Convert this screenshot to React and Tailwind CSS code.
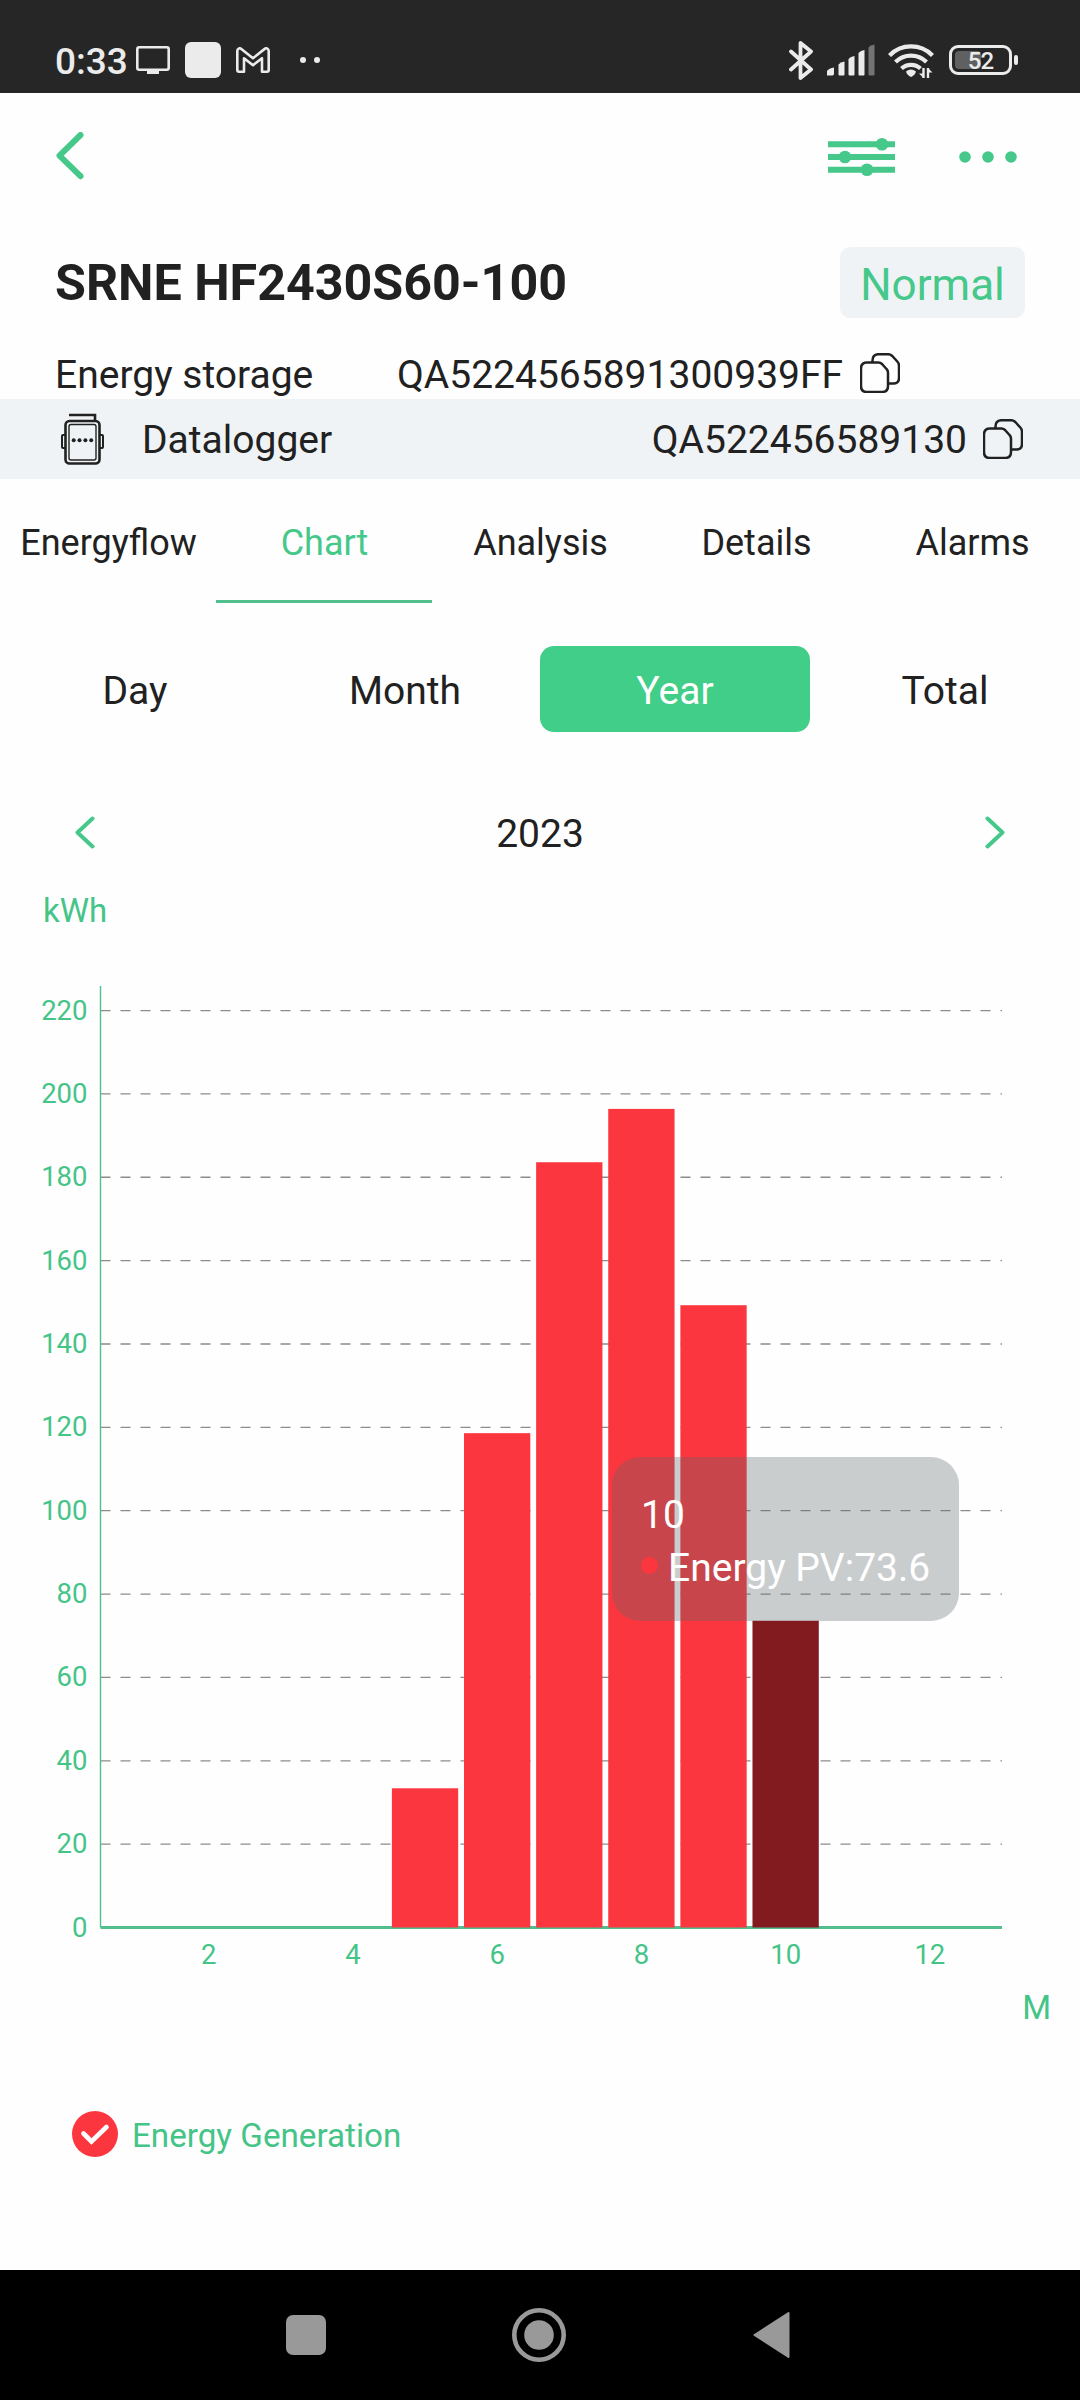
const TABS = ['Energyflow', 'Chart', 'Analysis', 'Details', 'Alarms']
const PERIODS = ['Day', 'Month', 'Year', 'Total']

const MONTHLY = [
  { month: 5, value: 33.4 },
  { month: 6, value: 118.6 },
  { month: 7, value: 183.6 },
  { month: 8, value: 196.4 },
  { month: 9, value: 149.3 },
  { month: 10, value: 73.6 },
]
const SELECTED_MONTH = 10

const Y_TICKS = [0, 20, 40, 60, 80, 100, 120, 140, 160, 180, 200, 220]
const X_TICKS = [2, 4, 6, 8, 10, 12]

// plot area, in chart pixels
const LEFT = 100.5
const RIGHT = 1002
const TOP = 56
const BASE = 997.5
const SLOT = 72.12
const BAR_WIDTH = 66.3

const yOf = (v) => BASE - v * 4.168
const xOf = (month) => LEFT + (month - 0.5) * SLOT

function StatusBar() {
  return (
    <header className="flex h-[93px] shrink-0 items-center justify-between bg-[#262626] pt-[27px] pr-[62px] pl-[55px] text-[#ebebeb]">
      <div className="flex items-center">
        <span className="w-[81px] pt-1 text-[37px] leading-10 font-medium">0:33</span>
        <svg className="h-7 w-[34px]" viewBox="0 0 34 28" fill="none">
          <rect x="1.3" y="1.3" width="31.4" height="22.4" rx="2" stroke="currentColor" strokeWidth="2.6" />
          <path d="M11 24h12v4H11z" fill="currentColor" />
        </svg>
        <span className="ml-[15px] size-9 rounded-md bg-[#ebebeb]" />
        <svg className="ml-[15px] h-[26px] w-[34px]" viewBox="0 0 34 26" fill="none" stroke="currentColor" strokeWidth="2.6" strokeLinejoin="round">
          <path d="M3 24.7H8V11.2l9 7 9-7v13.5h5q1.7 0 1.7-1.7V4c0-2.4-2.3-3.4-4-2.1L17 11.2 5.3 1.9C3.6.6 1.3 1.6 1.3 4v19q0 1.7 1.7 1.7z" />
        </svg>
        <span className="ml-[30px] size-1.5 rounded-full bg-[#ebebeb]" />
        <span className="ml-2 size-1.5 rounded-full bg-[#ebebeb]" />
      </div>

      <div className="flex items-center">
        <svg className="h-[39px] w-6" viewBox="0 0 24 39" fill="none" stroke="currentColor" strokeWidth="3.8" strokeLinecap="round" strokeLinejoin="round">
          <path d="M2 10.5L22 28.5 11.5 37V2L22 10.5 2 28.5" />
        </svg>
        <svg className="ml-3.5 h-8 w-12" viewBox="0 0 48 32" fill="currentColor">
          <path d="M0 31.5V27q2-3 7-3.5v6q0 2-1.5 2z" />
          <path d="M11.5 30.5v-10q2-2.5 6-3v13q0 1-1 1h-4q-1 0-1-1z" />
          <path d="M21.5 30.5V15q2-2.5 6-3v18.5q0 1-1 1h-4q-1 0-1-1z" />
          <path d="M31.5 30.5V9q2-2.5 6-3v24.5q0 1-1 1h-4q-1 0-1-1z" />
          <path d="M41.5 30.5v-27q2-2.5 6-3v30q0 1-1 1h-4q-1 0-1-1z" opacity="0.4" />
        </svg>
        <svg className="ml-[13px] h-[35px] w-[46px]" viewBox="0 0 46 35" fill="none" stroke="currentColor" strokeWidth="4.2">
          <path d="M1.5 12.5A30 30 0 0 1 44.500 12.5" />
          <path d="M7.5 19A22 22 0 0 1 38.500 19" />
          <path d="M13.5 25.500A14 14 0 0 1 32.500 25.500" />
          <path d="M18 28.500Q23 24.500 28 28.500Q27 32 23 34Q19 32 18 28.500z" fill="currentColor" stroke="none" />
          <path d="M35.5 25v10M40 35V25" strokeWidth="2.4" />
          <path d="M31 30.500h4.500v4.500zM44.500 29.500H40V25z" fill="currentColor" stroke="none" />
        </svg>
        <div className="relative ml-[15px] flex h-[30px] w-[63px] items-center justify-center rounded-[9px] border-3 border-[#ebebeb]">
          <span className="absolute top-[3px] left-[3px] h-[18px] w-[26px] rounded-[4px] bg-[#606060]" />
          <span className="relative pt-px text-[24px] leading-6 font-medium tracking-[-1px]">52</span>
        </div>
        <span className="ml-0.5 h-2.5 w-1 rounded-sm bg-[#ebebeb]" />
      </div>
    </header>
  )
}

function CopyIcon({ className }) {
  return (
    <svg className={className} viewBox="0 0 40 40" fill="none" stroke="currentColor" strokeWidth="2.5" strokeLinejoin="round">
      <path d="M7 9.5h11.500q2 0 3.500 1.500l4.500 5q1.500 1.500 1.500 3.500V33q0 6-6 6H7q-6 0-6-6V15.500q0-6 6-6z" />
      <path d="M12.5 9.5v-2q0-6.300 6.300-6.300H28q2.500 0 4.300 1.800l5 5.500q1.700 1.800 1.700 4.200V25q0 5.500-5.500 5.500H28" />
    </svg>
  )
}

function DataloggerIcon() {
  return (
    <svg className="h-[52px] w-[43px]" viewBox="0 0 43 52" fill="none" stroke="currentColor" strokeWidth="2.6">
      <path d="M8 2h26v6" />
      <rect x="4.5" y="8" width="34" height="42.5" rx="4" />
      <rect x="8" y="11.5" width="27" height="35.5" rx="2" strokeWidth="1.4" />
      <path d="M4 22H2q-1 0-1 1v11q0 1 1 1h2M39 22h2q1 0 1 1v11q0 1-1 1h-2" strokeWidth="2" />
      <g fill="currentColor" stroke="none">
        <circle cx="12.7" cy="27.3" r="2" />
        <circle cx="18.5" cy="27.3" r="2" />
        <circle cx="24.4" cy="27.3" r="2" />
        <circle cx="30.2" cy="27.3" r="2" />
      </g>
    </svg>
  )
}

function Chevron({ right }) {
  return (
    <svg className="h-[34px] w-5" viewBox="0 0 20 34" fill="none" stroke="#46c88a" strokeWidth="4" strokeLinecap="round" strokeLinejoin="round">
      <path d={right ? 'M2.500 2.5L17.500 16.5 2.500 30.500' : 'M17.500 2.5L2.500 16.5 17.500 30.500'} />
    </svg>
  )
}

function EnergyChart() {
  return (
    <div className="relative h-[1050px]">
      <svg className="block h-[1050px] w-[1080px]" viewBox="0 0 1080 1050">
        {Y_TICKS.slice(1).map((v) => (
          <line key={v} x1={LEFT} x2={RIGHT} y1={yOf(v)} y2={yOf(v)} stroke="#8c8c8c" strokeWidth="1.3" strokeDasharray="10 10" />
        ))}
        <line x1={LEFT} x2={RIGHT} y1={BASE} y2={BASE} stroke="#52be8e" strokeWidth="2.8" />
        <line x1={LEFT} x2={LEFT} y1={TOP} y2={BASE} stroke="#52be8e" strokeWidth="1.4" />
        {MONTHLY.map(({ month, value }) => (
          <rect
            key={month}
            x={xOf(month) - BAR_WIDTH / 2}
            y={yOf(value)}
            width={BAR_WIDTH}
            height={BASE - yOf(value)}
            fill={month === SELECTED_MONTH ? '#821b20' : '#fc363e'}
          />
        ))}
        <g fill="#45c488" fontSize="27.5">
          {Y_TICKS.map((v) => (
            <text key={v} x="87.5" y={yOf(v) + 9} textAnchor="end">{v}</text>
          ))}
          {X_TICKS.map((m) => (
            <text key={m} x={xOf(m)} y="1034" textAnchor="middle">{m}</text>
          ))}
        </g>
      </svg>

      <div className="absolute top-[527px] left-[612px] h-[164px] w-[347px] rounded-[28px] bg-[rgb(94,103,106)]/32 pt-8 pl-[29px] text-[39px] leading-[53px] text-white">
        <div>10</div>
        <div className="flex items-center whitespace-nowrap">
          <span className="mr-2.5 -mt-1.5 size-[17px] rounded-full bg-[#fc363e]" />
          Energy PV:73.6
        </div>
      </div>
    </div>
  )
}

export default function App() {
  return (
    <div className="flex h-[2400px] w-[1080px] flex-col overflow-hidden bg-[#fefefe] font-['Roboto',sans-serif] text-[39px] text-[#212121]">
      <StatusBar />

      <div className="flex h-[126px] shrink-0 items-center justify-between pr-[63px] pl-14 text-[#46c88a]">
        <svg className="h-12 w-7" viewBox="0 0 28 48" fill="none" stroke="currentColor" strokeWidth="6" strokeLinecap="round" strokeLinejoin="round">
          <path d="M24.5 3L3.500 23.600l21 20.600" />
        </svg>
        <div className="flex items-center">
          <svg className="mt-0.5 h-[38px] w-[67px]" viewBox="0 0 67 38" fill="currentColor">
            <path d="M0 3.3h67v6H0zM0 16h67v6H0zM0 28.7h67v6H0z" />
            <circle cx="54" cy="6.3" r="6.3" />
            <circle cx="17" cy="19" r="6.3" />
            <circle cx="39" cy="31.7" r="6.3" />
          </svg>
          <svg className="mt-0.5 ml-16 h-3 w-[58px]" viewBox="0 0 58 12" fill="currentColor">
            <circle cx="6" cy="6" r="5.8" />
            <circle cx="29" cy="6" r="5.8" />
            <circle cx="52" cy="6" r="5.8" />
          </svg>
        </div>
      </div>

      <div className="mt-7 flex h-[71px] shrink-0 items-center justify-between px-[55px]">
        <h1 className="text-[50.2px] leading-[71px] font-bold">SRNE HF2430S60-100</h1>
        <span className="flex h-[71px] w-[185px] items-center justify-center rounded-[10px] bg-[#f0f3f6] pt-1 text-[44px] text-[#46c88a]">
          Normal
        </span>
      </div>

      <div className="mt-8 flex h-[49px] shrink-0 items-center pl-[55px]">
        <span className="w-[342px] pt-0.5">Energy storage</span>
        <span className="pt-0.5">QA5224565891300939FF</span>
        <CopyIcon className="mb-1 ml-[17px] size-10" />
      </div>

      <div className="flex h-20 shrink-0 items-center bg-[#f0f3f5] pr-[57px] pl-[61px]">
        <DataloggerIcon />
        <span className="ml-[38px] pt-[3px]">Datalogger</span>
        <span className="ml-auto pt-[3px]">QA522456589130</span>
        <CopyIcon className="ml-4 size-10" />
      </div>

      <nav className="grid h-[124px] shrink-0 grid-cols-5 text-[36px]">
        {TABS.map((tab) => (
          <button
            key={tab}
            type="button"
            className={
              tab === 'Chart'
                ? 'border-b-3 border-[#52c08e] pt-[7px] pl-px text-[#46c88a]'
                : 'border-b-3 border-transparent pt-[7px] pl-px'
            }
          >
            {tab}
          </button>
        ))}
      </nav>

      <div className="mt-[43px] grid h-[86px] shrink-0 grid-cols-4">
        {PERIODS.map((period) => (
          <button
            key={period}
            type="button"
            className={period === 'Year' ? 'rounded-[14px] bg-[#41ce88] pt-1 text-white' : 'pt-1'}
          >
            {period}
          </button>
        ))}
      </div>

      <div className="mt-[71px] flex h-[60px] shrink-0 items-center justify-between px-[75px]">
        <Chevron />
        <span className="pt-0.5">2023</span>
        <Chevron right />
      </div>

      <div className="mt-7 h-[39px] shrink-0 pl-[43px] text-[33px] leading-10 text-[#45c488]">kWh</div>
      <EnergyChart />
      <div className="mt-2 h-10 shrink-0 pr-[29px] text-right text-[33px] leading-10 text-[#45c488]">M</div>

      <div className="mt-[83px] flex h-[46px] shrink-0 items-center pl-[72px] text-[33.2px] text-[#45c488]">
        <svg className="size-[46px]" viewBox="0 0 46 46" fill="none">
          <circle cx="23" cy="23" r="23" fill="#fc363e" />
          <path d="M11.5 22.500l8 8L34.500 16" stroke="#fff" strokeWidth="4.6" strokeLinecap="round" />
        </svg>
        <span className="mt-[3px] ml-3.5">Energy Generation</span>
      </div>

      <footer className="mt-auto flex h-[130px] shrink-0 items-center bg-black pl-[286px] text-[#999999]">
        <span className="size-10 rounded-[7px] bg-[#999999]" />
        <svg className="ml-[186px] size-[54px]" viewBox="0 0 54 54" fill="none">
          <circle cx="27" cy="27" r="24.7" stroke="currentColor" strokeWidth="4.6" />
          <circle cx="27" cy="27" r="14.8" fill="currentColor" />
        </svg>
        <svg className="ml-[187px] h-[46px] w-[37px]" viewBox="0 0 37 46" fill="currentColor">
          <path d="M35.5 1L1.500 23l34 22z" stroke="currentColor" strokeWidth="2" strokeLinejoin="round" />
        </svg>
      </footer>
    </div>
  )
}
